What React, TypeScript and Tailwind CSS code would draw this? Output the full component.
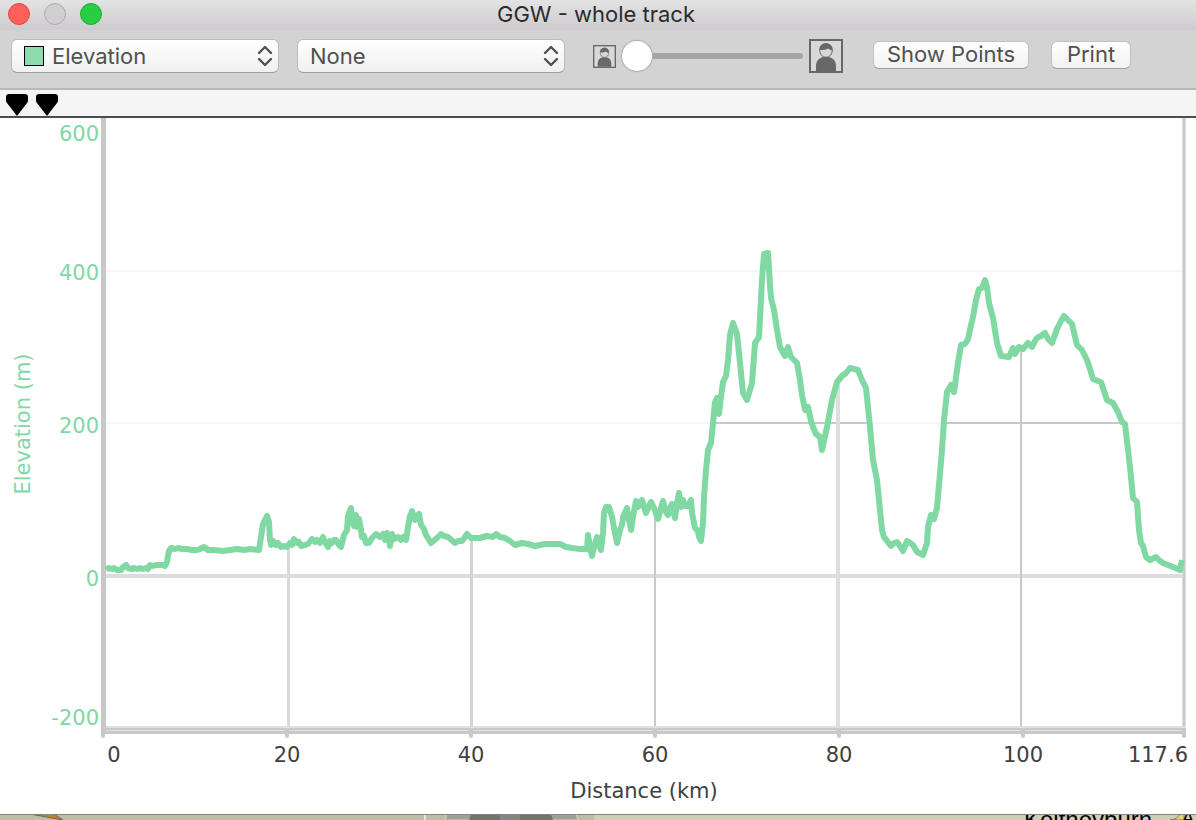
import React from "react";

const yLabels = [
  { label: "600", y: 141 },
  { label: "400", y: 280 },
  { label: "200", y: 433 },
  { label: "0", y: 586 },
  { label: "-200", y: 725 },
];

const xLabels = [
  { label: "20", x: 287 },
  { label: "40", x: 471 },
  { label: "60", x: 655 },
  { label: "80", x: 839 },
  { label: "100", x: 1023 },
];

// vertical lines hang from the profile down to the bottom axis
const dropLines = [
  { x: 287, width: 3, top: 547, color: "#d9d9d9" },
  { x: 470, width: 3, top: 538, color: "#d2d2d2" },
  { x: 654, width: 2, top: 510, color: "#c9c9c9" },
  { x: 836, width: 4, top: 382, color: "#dedede" },
  { x: 1020, width: 2, top: 346, color: "#c8c8c8" },
];

const profile = `106,569 109,568 112,569 114,568 117,570 121,570 123,567 126,565 128,568 132,569 134,568 137,569
140,568 143,569 146,568 148,569 150,565 153,566 156,565 163,565 165,566 167,562 168,556 169,551
171,548 175,549 178,548 182,549 187,549 192,550 197,550 200,549 204,547 208,550 214,550 223,551 230,550
237,549 244,550 250,549 259,550 261,537 263,524 265,520 267,516
269,522 270,540 271,545 273,541 276,545 278,543 281,547 284,546 287,547 290,543 292,545 294,539 297,543
299,542 301,546 305,545 308,544 312,539 315,542 317,540 320,543 323,537 325,542 328,547 330,541 332,543
334,540 336,540 339,545 341,547 344,535 347,530 348,516
351,508 352,520 354,526 356,515 357,527 359,519 361,530 362,537 364,536 366,543 369,543 372,538 376,534 380,537
383,534 385,540 387,533 389,539 390,546 392,534 394,539 398,537 401,540 403,537 406,540 408,527 410,516
412,511 415,520 419,514 421,525 424,529 426,535 431,543
437,538 441,534 444,536 448,537 455,543 458,541 462,541 467,534 471,538 480,538 487,536 493,537 496,534 500,537
505,538 510,541 515,545 522,543 528,544 535,546 545,544 560,544 566,547 572,548 580,549 587,549 588,535 590,547
592,556 594,547 597,537 599,545 601,550 603,533 604,513 606,507 609,507 612,517 615,533 617,543 620,530 622,525
623,517 627,508 629,520 631,530 633,517 636,501 638,507 642,500 646,513 649,506 651,502 654,508 658,519 661,508
663,501 666,512 668,515 670,508 672,504 675,518 677,503 679,493 681,507 683,500 685,506 688,506 691,500 692,513
695,528 698,531 699,537 701,541 703,523 704,497 706,470 708,450 711,443 713,423 715,402 717,398 719,414 721,397
723,382 726,376 728,360 730,335 733,323 737,334 740,363 743,393 747,400 752,383 755,343 759,337
762,280 764,254 768,253 770,285 771,298 774,310 777,330 780,347 785,356 788,347 791,357 797,363 800,380 802,395
805,410 808,407 811,421 813,427 816,434 820,437 822,450 827,427 832,400 837,382 842,376 846,373 850,368 858,370
862,380 866,388 870,427 873,460 877,480 882,530 884,537 891,546 894,543 897,542 900,546 903,551 907,541 913,545
917,552 923,555 927,543 928,527 931,515 934,519 937,508 942,450 944,420 947,392 951,385 954,392 958,363
961,345 965,344 968,339 971,325 973,317 976,300 979,289 982,288 985,280 987,287 989,303 993,318 997,343 1001,356
1009,357 1013,348 1015,354 1019,347 1023,349 1028,343 1032,347 1035,341 1037,338 1041,336 1045,333 1048,339
1052,343 1057,329 1061,321 1064,316 1068,320 1072,324 1077,345 1082,350 1087,360 1090,369 1093,379 1098,381
1101,382 1104,391 1107,400 1113,403 1118,412 1122,422 1125,424 1130,467
1133,498 1137,502 1139,530 1141,543 1143,546 1146,557 1150,560 1156,557 1160,561 1163,563 1168,565 1173,567
1180,570 1182,560`;

const Chevrons = () => (
  <svg
    className="pointer-events-none absolute right-1.5 top-1.5 h-[22px] w-4"
    viewBox="0 0 16 22"
    fill="none"
    stroke="#505050"
    strokeWidth="2.4"
    strokeLinecap="round"
    strokeLinejoin="round"
  >
    <path d="M2 8 8 2l6 6M2 14l6 6 6-6" />
  </svg>
);

const Person = ({ className }: { className: string }) => (
  <svg className={className} viewBox="0 0 34 34">
    <rect x="1" y="1" width="32" height="32" fill="#d8d8d8" stroke="#686868" strokeWidth="2" />
    <path d="M7 32v-5c0-5 3-8 7-9h6c4 1 7 4 7 9v5z" fill="#686868" />
    <ellipse cx="17" cy="11.500" rx="6.300" ry="6.800" fill="#d8d8d8" stroke="#686868" strokeWidth="1" />
    <path d="M10.500 11c-.5-4 2.500-6.800 6.500-6.800s7 3 6.500 7.300c-2-.2-3.300-.8-4.500-2-2.500 1.500-5 1.800-8.500 1.500z" fill="#686868" />
  </svg>
);

const Marker = () => (
  <svg className="h-[22px] w-[22px]" viewBox="0 0 22 22">
    <path d="M3 0h16q3 0 3 3v4q0 1-1 2L11 22 1 9Q0 8 0 7V3Q0 0 3 0z" fill="#000" />
  </svg>
);

const selectClass =
  "h-[34px] w-full appearance-none rounded-md border border-[#bcbcbc] border-b-[#a0a0a0] bg-gradient-to-b from-white to-[#f0f0f0] pr-8 text-[22px] leading-7 text-[#505050] outline-none";

const buttonClass =
  "flex h-7 items-center justify-center rounded-md border border-[#c0c0c0] border-b-[#a0a0a0] bg-gradient-to-b from-white to-[#f2f2f2] pb-0.5 text-[22px] leading-6 text-[#505050]";

const Toolbar = () => {
  return (
    <div className="flex h-[60px] items-start border-b-2 border-[#b9b9b9] bg-[#d3d3d3] pl-[11px] pt-[9px]">
      <div className="relative w-[268px] shrink-0">
        <select aria-label="Primary series" className={`${selectClass} pl-10`}>
          <option>Elevation</option>
        </select>
        <span className="pointer-events-none absolute left-[13px] top-[7px] h-5 w-5 border border-black bg-[#8fdbb0]" />
        <Chevrons />
      </div>
      <div className="relative ml-[18px] w-[268px] shrink-0">
        <select aria-label="Secondary series" className={`${selectClass} pl-3`}>
          <option>None</option>
        </select>
        <Chevrons />
      </div>
      <div className="ml-7 flex h-[34px] shrink-0 items-center">
        <Person className="h-[23px] w-[23px]" />
        <input
          type="range"
          aria-label="Zoom"
          min={0}
          max={100}
          defaultValue={0}
          className="ml-1.5 h-8 w-[181px] appearance-none bg-transparent [&::-webkit-slider-runnable-track]:h-1.5 [&::-webkit-slider-runnable-track]:rounded-full [&::-webkit-slider-runnable-track]:bg-[#a5a5a5] [&::-webkit-slider-thumb]:-mt-3 [&::-webkit-slider-thumb]:h-[30px] [&::-webkit-slider-thumb]:w-[30px] [&::-webkit-slider-thumb]:appearance-none [&::-webkit-slider-thumb]:rounded-full [&::-webkit-slider-thumb]:bg-white [&::-webkit-slider-thumb]:shadow-[0_0_1px_1px_#b0b0b0]"
        />
        <Person className="ml-1.5 h-[34px] w-[34px]" />
      </div>
      <button className={`${buttonClass} ml-[30px] mt-0.5 w-[156px] shrink-0`}>Show Points</button>
      <button className={`${buttonClass} ml-[22px] mt-0.5 w-20 shrink-0`}>Print</button>
    </div>
  );
};

const Chart = () => {
  return (
    <svg
      className="block h-auto w-full bg-white font-['DejaVu_Sans',sans-serif] text-[21px]"
      viewBox="0 118 1196 696"
      role="img"
      aria-label="Elevation over distance"
    >
      <g shapeRendering="crispEdges">
        <rect x="106" y="270" width="1080" height="2" fill="#f6f6f6" />
        <rect x="106" y="422" width="1080" height="2" fill="#f6f6f6" />
        <rect x="714" y="422" width="154" height="2" fill="#c8c8c8" />
        <rect x="945" y="422" width="179" height="2" fill="#c8c8c8" />
        <rect x="106" y="574" width="1080" height="4" fill="#dcdcdc" />
        {dropLines.map((line) => (
          <rect key={line.x} x={line.x} y={line.top} width={line.width} height={730 - line.top} fill={line.color} />
        ))}
        <rect x="1182" y="118" width="4" height="614" fill="#dedede" />
        <rect x="1183" y="118" width="2" height="614" fill="#cacaca" />
        <rect x="101" y="118" width="5" height="616" fill="#c8c8c8" />
        <rect x="106" y="726" width="1080" height="5" fill="#e0e0e0" />
        <rect x="106" y="728" width="1080" height="2" fill="#c8c8c8" />
        <rect x="101" y="731" width="1085" height="3" fill="#c8c8c8" />
      </g>

      {[103, 287, 471, 655, 839, 1023, 1184].map((x) => (
        <path key={x} d={`M${x} 731v5`} stroke="#c8c8c8" strokeWidth="4" strokeLinecap="round" />
      ))}

      <polyline
        points={profile}
        fill="none"
        stroke="#80d8a2"
        strokeWidth="6"
        strokeLinejoin="round"
      />

      <g fill="#80d8a2">
        {yLabels.map((item) => (
          <text key={item.label} x="99" y={item.y} textAnchor="end">
            {item.label}
          </text>
        ))}
        <text transform="translate(30 424) rotate(-90)" textAnchor="middle">
          Elevation (m)
        </text>
      </g>

      <g fill="#404040">
        <text x="114" y="762" textAnchor="middle">0</text>
        {xLabels.map((item) => (
          <text key={item.label} x={item.x} y="762" textAnchor="middle">
            {item.label}
          </text>
        ))}
        <text x="1188" y="762" textAnchor="end">117.6</text>
        <text x="644" y="798" textAnchor="middle">Distance (km)</text>
      </g>
    </svg>
  );
};

// sliver of the map that shows below the window
const MapStrip = () => {
  return (
    <svg className="block h-auto w-full" viewBox="0 0 1196 6">
      <rect width="1196" height="6" fill="#cfceb6" />
      <rect width="594" height="6" fill="#bdbca6" />
      <path d="M30 0h24l9 6z" fill="#c5821f" stroke="#666" />
      <path d="M425 0v6" stroke="#e4e4e4" strokeWidth="2" />
      <path d="M447 0h129l2 6H445z" fill="#a0a094" stroke="#d5d5d5" />
      <path d="M471 0h80l2 6h-84z" fill="#72746e" />
      <rect x="500" width="20" height="6" fill="#858681" />
      <path d="M1170 6q8-1 10-6h4v6z" fill="#e6d860" stroke="#777" />
      <g className="font-['Liberation_Sans',Arial,sans-serif] text-2xl">
        <text x="1024" y="14">Keltneyburn</text>
        <text x="1182" y="10" fontSize="18" className="text-lg">A</text>
      </g>
      <rect width="1196" height="1" fill="#858578" />
    </svg>
  );
};

const App = () => {
  return (
    <main className="w-full overflow-hidden bg-white font-[Inter,sans-serif]">
      <header className="relative flex h-[30px] items-center justify-center bg-gradient-to-b from-[#e4e3e4] to-[#cdcbcd] pb-0.5 pr-1">
        <div className="absolute left-2 top-[3px] flex gap-3.5">
          <button aria-label="Close" className="h-[22px] w-[22px] rounded-full border border-[#e2463f] bg-[#ff6057]" />
          <button aria-label="Minimize" className="h-[22px] w-[22px] rounded-full border border-[#aeacae] bg-[#d0ced0]" />
          <button aria-label="Zoom window" className="h-[22px] w-[22px] rounded-full border border-[#1dad2b] bg-[#28cd41]" />
        </div>
        <h1 className="text-[22px] leading-7 text-[#2b2b2b]">GGW - whole track</h1>
      </header>
      <Toolbar />
      <div className="flex h-7 gap-2 border-b-2 border-[#4d4b4d] bg-[#f5f5f5] pl-1.5 pt-1">
        <Marker />
        <Marker />
      </div>
      <Chart />
      <MapStrip />
    </main>
  );
};

export default App;
